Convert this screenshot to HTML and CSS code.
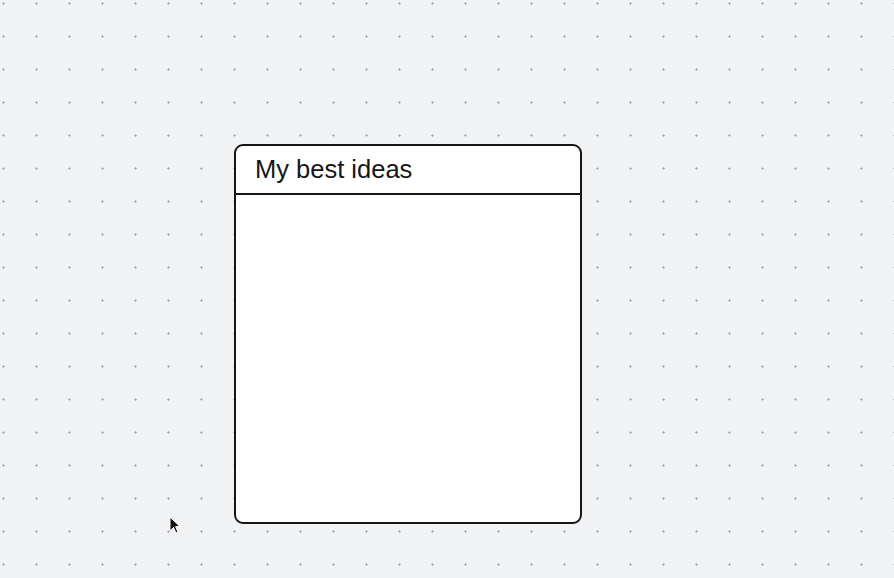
FILE: index.html
```html
<!DOCTYPE html>
<html>
<head>
<meta charset="utf-8">
<link rel="stylesheet" href="styles.css">
</head>
<body>
<div class="canvas">
  <div class="frame">
    <div class="frame-header">My best ideas</div>
    <div class="frame-body"></div>
  </div>
  <svg class="cursor" width="14" height="20" viewBox="0 0 14 20">
    <path d="M1 1 L1 15 L4.5 11.5 L7 17 L9 16 L6.6 10.6 L11 10.6 Z" fill="#111" stroke="#fff" stroke-width="1"/>
  </svg>
</div>
</body>
</html>
```
FILE: styles.css
```css
html, body {
  margin: 0;
  padding: 0;
}
body {
  font-family: "Liberation Sans", Arial, sans-serif;
}
.canvas {
  position: relative;
  width: 894px;
  height: 578px;
  overflow: hidden;
  background-color: #f1f2f4;
  background-image: radial-gradient(circle, #a4a6aa 0.9px, rgba(0,0,0,0) 1.3px);
  background-size: 33px 33px;
  background-position: -13px -13px;
}
.frame {
  position: absolute;
  left: 234px;
  top: 144px;
  width: 348px;
  height: 380px;
  box-sizing: border-box;
  border: 2px solid #161618;
  border-radius: 9px;
  background: #fff;
  display: flex;
  flex-direction: column;
  overflow: hidden;
}
.frame-header {
  height: 47px;
  border-bottom: 2px solid #161618;
  padding-left: 19px;
  display: flex;
  align-items: center;
  font-size: 25.5px;
  color: #161618;
}
.frame-body {
  flex: 1;
}
.cursor {
  position: absolute;
  left: 169px;
  top: 516px;
}
```
